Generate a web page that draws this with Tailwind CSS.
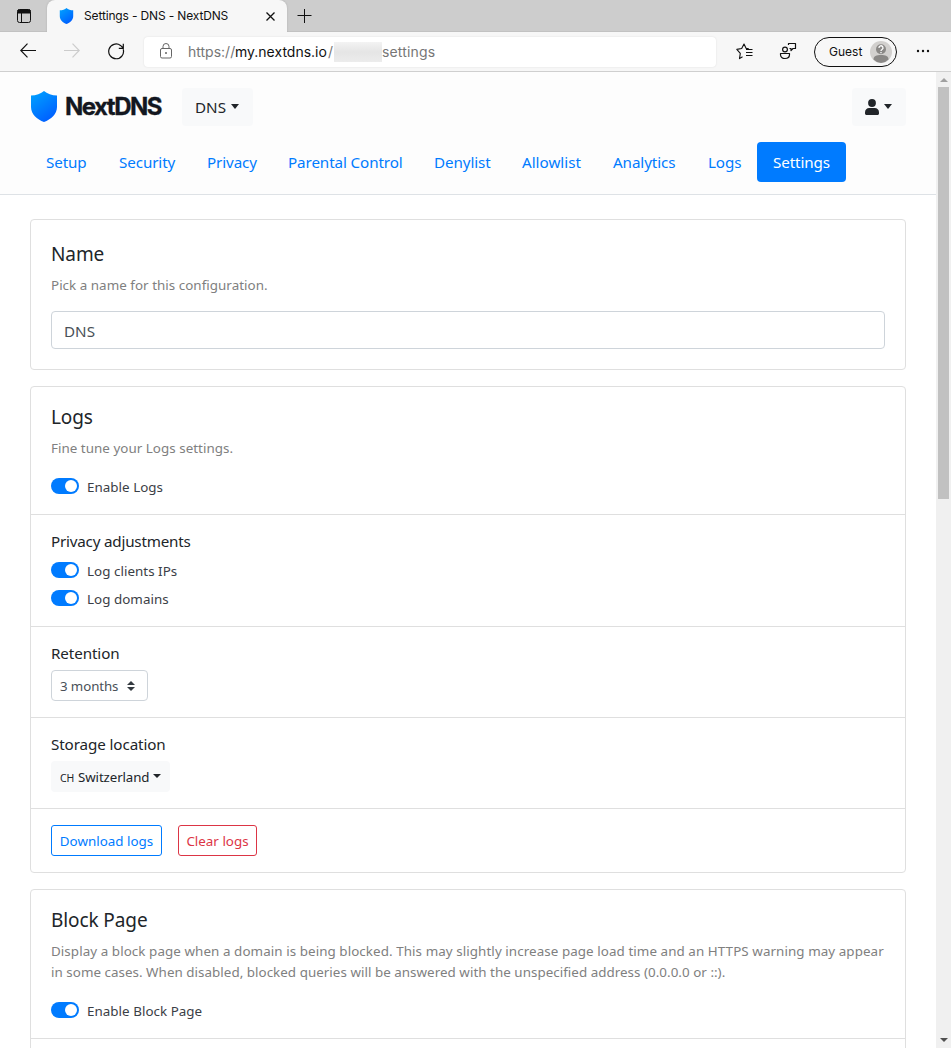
<!DOCTYPE html>
<html lang="en">
<head>
<meta charset="utf-8">
<title>Settings - DNS - NextDNS</title>
<script src="https://cdn.jsdelivr.net/npm/@tailwindcss/browser@4"></script>
</head>
<body class="h-[1048px] w-[951px] overflow-hidden bg-white font-['Noto_Sans','Open_Sans',sans-serif] text-[15.2px] tracking-[-0.1px] text-[#212529]">
<div class="flex h-full flex-col">
  <!-- tab strip -->
  <div class="flex h-8 shrink-0 border-b border-[#c2c2c2] bg-[#cdcdcd] font-[Inter,sans-serif] text-xs tracking-normal text-[#111]">
    <div class="w-[47px] pl-4 pt-2">
      <svg width="16" height="16" viewBox="0 0 16 16" fill="none" stroke="#111"><rect x="1.5" y="1.5" width="13" height="13" rx="2"/><path d="M2 2h12v3H2z" fill="#111"/><path d="M5.5 5v9.500"/></svg>
    </div>
    <div class="flex h-8 w-60 items-center rounded-t-lg bg-[#f7f7f7] pl-3 shadow-[0_0_2px_#aaa]">
      <svg width="15" height="16" viewBox="0 0 26 31"><defs><linearGradient id="shield" x1="0" y1="0" x2="0.6" y2="1"><stop offset="0" stop-color="#00a5ff"/><stop offset="1" stop-color="#0060ff"/></linearGradient></defs><path d="M13 0c3 2.600 8 4.400 13 4.600v11.400c0 7-6 12.500-13 15C6 28.500 0 23 0 16V4.600C5 4.400 10 2.600 13 0z" fill="url(#shield)"/></svg>
      <span class="ml-[10px] w-[150px] whitespace-nowrap tracking-[-0.15px]">Settings - DNS - NextDNS</span>
      <svg class="ml-8" width="9" height="9" viewBox="0 0 9 9" stroke="#111" stroke-width="1.3"><path d="M.5.5l8 8M8.500.5l-8 8"/></svg>
    </div>
    <svg class="ml-[10px] mt-2" width="16" height="16" viewBox="0 0 16 16" stroke="#111"><path d="M7.500 1v14M.5 7.500h14"/></svg>
  </div>
  <!-- toolbar -->
  <div class="flex h-10 shrink-0 items-center border-b border-[#cfcfcf] bg-[#f7f7f7] font-[Inter,sans-serif] tracking-normal text-[#111]">
    <svg class="ml-5 mb-px" width="16" height="16" viewBox="0 0 16 16" fill="none" stroke="#111" stroke-width="1.2"><path d="M16 7.500H.8M7.500.7L.8 7.500l6.700 6.800"/></svg>
    <svg class="ml-7 mb-px" width="16" height="16" viewBox="0 0 16 16" fill="none" stroke="#ccc" stroke-width="1.2"><path d="M0 7.500h15.200M8.500.7L15.200 7.500l-6.700 6.800"/></svg>
    <svg class="ml-7 mb-px" width="17" height="17" viewBox="0 0 17 17" fill="none" stroke="#111" stroke-width="1.2"><path d="M15.200 6.200A7.400 7.400 0 1 1 12.500 2.400L15.200 5M15.300.8v4.500H10.800"/></svg>
    <div class="ml-[19px] flex h-[30px] w-[572px] items-center rounded bg-white shadow-[0_0_2px_#ddd]">
      <svg class="ml-4 mb-px" width="12" height="16" viewBox="0 0 12 16" fill="none" stroke="#666"><rect x=".5" y="5.500" width="11" height="9.500" rx="1.500"/><path d="M3 5.500V3.500a3 3 0 0 1 6 0v2"/><circle cx="6" cy="10" r=".6" fill="#666"/></svg>
      <div class="ml-4 flex items-center whitespace-nowrap text-sm text-[#767676]"><span class="w-[47px]">https://</span><span class="w-[93px] text-[#111]">my.nextdns.io</span><span class="w-[6px]">/</span><span class="h-5 w-12 bg-linear-to-b from-[#f3f3f3] via-[#e5e5e5] to-[#ececec]"></span><span class="tracking-[0.15px]">settings</span></div>
    </div>
    <svg class="ml-5 mb-px" width="17" height="17" viewBox="0 0 17 17" fill="none" stroke="#111" stroke-width="1.1" stroke-linejoin="round"><path d="M6.500 13.800L3.500 15.600 4.300 10.300.8 6.400l4.900-.9L8 1l2.200 4.500h2.500M10 6.500h6.500M10 9.500h6.500M10 12.500h6.500"/></svg>
    <svg class="ml-[26px] mb-px" width="18" height="18" viewBox="0 0 18 18" fill="none" stroke="#111" stroke-width="1.200" stroke-linejoin="round"><circle cx="6" cy="7.500" r="2.400"/><path d="M1.500 11.500h9v1c0 2.500-2 4-4.500 4s-4.500-1.500-4.500-4zM9.500 3V1.500h7v5H14l-2 2V6.500h-1.500"/></svg>
    <div class="ml-[17px] flex h-[30px] w-[83px] items-center rounded-full border border-[#111] pl-[14px] text-xs"><span class="w-[41px]">Guest</span>
      <svg width="22" height="22" viewBox="0 0 22 22"><circle cx="11" cy="11" r="11" fill="#d2d0ce"/><path d="M3.500 18.500c0-3.500 3-4.500 7.500-4.500s7.500 1 7.500 4.500A11 11 0 0 1 11 22a11 11 0 0 1-7.500-3.500z" fill="#8a8886"/><circle cx="11" cy="8.200" r="5" fill="#8a8886"/><path d="M9 7a2 2 0 1 1 3 1.500c-.8.500-1 .8-1 1.500M11 11v1.200" fill="none" stroke="#fff" stroke-width="1.300"/></svg>
    </div>
    <svg class="ml-[19px] mb-px" width="14" height="4" viewBox="0 0 14 4" fill="#111"><circle cx="2" cy="2" r="1.200"/><circle cx="7" cy="2" r="1.200"/><circle cx="12" cy="2" r="1.200"/></svg>
  </div>
  <div class="flex min-h-0 flex-1">
    <main class="w-[936px] overflow-hidden">
      <header class="h-[123px] border-b border-[#dee2e6] bg-[#fdfdfd] px-[30px] pt-4">
        <div class="flex h-[38px] items-center">
          <svg class="mr-2 mb-[2px] ml-px" width="26" height="31" viewBox="0 0 26 31"><path d="M13 0c3 2.600 8 4.400 13 4.600v11.400c0 7-6 12.500-13 15C6 28.500 0 23 0 16V4.600C5 4.400 10 2.600 13 0z" fill="url(#shield)"/></svg>
          <span class="w-[117px] whitespace-nowrap font-[Inter,sans-serif] text-2xl font-bold tracking-[-1.5px] text-[#131720] [-webkit-text-stroke:0.3px_#131720]">NextDNS</span>
          <button class="flex h-[38px] w-[71px] items-center rounded bg-[#f8f9fa] pl-[13px]"><span class="w-9 text-left tracking-normal">DNS</span><span class="mb-px border-x-[4.5px] border-t-[5px] border-x-transparent border-t-[#212529]"></span></button>
          <button class="ml-auto flex h-[38px] w-[54px] items-center rounded bg-[#f8f9fa] pl-[13px]"><svg width="14" height="16" viewBox="0 0 448 512" fill="#212529"><circle cx="224" cy="128" r="125"/><path d="M314 288H134C60 288 0 348 0 422v42c0 26 22 48 48 48h352c26 0 48-22 48-48v-42c0-74-60-134-134-134z"/></svg><span class="mb-px ml-[5px] border-x-[4.5px] border-t-[5px] border-x-transparent border-t-[#212529]"></span></button>
        </div>
        <nav class="mt-4 flex h-10 items-center whitespace-nowrap text-[#007bff]">
          <a class="w-[73px] pl-4">Setup</a><a class="w-[88px] pl-4">Security</a><a class="w-[81px] pl-4">Privacy</a><a class="w-[146px] pl-4">Parental Control</a><a class="w-[88px] pl-4">Denylist</a><a class="w-[91px] pl-4 tracking-normal">Allowlist</a><a class="w-[95px] pl-4">Analytics</a><a class="w-[65px] pl-4">Logs</a><a class="flex h-10 w-[89px] items-center rounded bg-[#007bff] pl-4 text-white">Settings</a>
        </nav>
      </header>
      <div class="flex flex-col gap-4 px-[30px] pt-6">
        <section class="h-[151px] rounded border border-[#dfdfdf] px-5 pt-[19px]">
          <h5 class="h-[30px] text-[19px] leading-[30px]">Name</h5>
          <p class="mt-1.5 h-[21px] text-[13.4px] tracking-[0.03px] leading-[21px] text-[#808080]">Pick a name for this configuration.</p>
          <div class="mt-[15px] flex h-[38px] items-center rounded border border-[#ced4da] px-3 pt-[3px] text-[#495057] tracking-normal">DNS</div>
        </section>
        <section class="h-[487px] rounded border border-[#dfdfdf]">
          <div class="h-[128px] border-b border-[#dfdfdf] px-5 pt-[15px]">
            <h5 class="h-[30px] text-[19px] leading-[30px]">Logs</h5>
            <p class="mt-1.5 h-[21px] text-[13.4px] tracking-[0.03px] leading-[21px] text-[#808080]">Fine tune your Logs settings.</p>
            <label class="mt-[17px] flex h-[21px] items-center gap-2 text-[13.4px] tracking-[0.03px] text-[#3b4046]"><span class="mb-0.5 flex h-4 w-7 items-center justify-end rounded-full bg-[#007bff] pr-0.5"><i class="size-3 rounded-full bg-white"></i></span><span class="pt-0.5">Enable Logs</span></label>
          </div>
          <div class="h-[112px] border-b border-[#dfdfdf] px-5 pt-[14px]">
            <h6 class="h-6 leading-6 tracking-[-0.2px]">Privacy adjustments</h6>
            <label class="mt-[7px] flex h-[21px] items-center gap-2 text-[13.4px] tracking-[0.03px] text-[#3b4046]"><span class="mb-0.5 flex h-4 w-7 items-center justify-end rounded-full bg-[#007bff] pr-0.5"><i class="size-3 rounded-full bg-white"></i></span><span class="pt-0.5">Log clients IPs</span></label>
            <label class="mt-[7px] flex h-[21px] items-center gap-2 text-[13.4px] tracking-[0.03px] text-[#3b4046]"><span class="mb-0.5 flex h-4 w-7 items-center justify-end rounded-full bg-[#007bff] pr-0.5"><i class="size-3 rounded-full bg-white"></i></span><span class="pt-0.5">Log domains</span></label>
          </div>
          <div class="h-[91px] border-b border-[#dfdfdf] px-5 pt-[14px]">
            <h6 class="h-6 leading-6">Retention</h6>
            <div class="mt-[5px] flex h-[31px] w-[97px] items-center rounded border border-[#ced4da] pl-2 text-[13.3px] text-[#495057]"><span class="w-[67px] pt-0.5 whitespace-nowrap">3 months</span><svg width="8" height="10" viewBox="0 0 8 10" fill="#343a40"><path d="M4 0L0 4h8zM4 10L0 6h8z"/></svg></div>
          </div>
          <div class="h-[91px] border-b border-[#dfdfdf] px-5 pt-[14px]">
            <h6 class="h-6 leading-6">Storage location</h6>
            <button class="mt-[5px] flex h-[31px] w-[119px] items-center rounded bg-[#f8f9fa] pl-[9px] text-left text-[13.3px] whitespace-nowrap"><span class="w-[18px] pt-[4px] text-[10.5px]">CH</span><span class="w-[75px] pt-0.5 tracking-[-0.1px]">Switzerland</span><span class="mb-px border-x-4 border-t-4 border-x-transparent border-t-[#212529]"></span></button>
          </div>
          <div class="flex gap-4 px-5 pt-4 text-[13.4px] tracking-normal whitespace-nowrap">
            <button class="h-[31px] w-[111px] rounded-[3px] border border-[#007bff] pt-0.5 text-[#007bff]">Download logs</button>
            <button class="h-[31px] w-[79px] rounded-[3px] border border-[#dc3545] pt-0.5 text-[#dc3545]">Clear logs</button>
          </div>
        </section>
        <section class="h-[200px] shrink-0 rounded border border-[#dfdfdf]">
          <div class="h-[149px] border-b border-[#dfdfdf] px-5 pt-[15px]">
            <h5 class="h-[30px] text-[19px] leading-[30px]">Block Page</h5>
            <p class="mt-1.5 h-[42px] text-[13.4px] leading-[21px] whitespace-nowrap text-[#808080]"><span class="tracking-[0.07px]">Display a block page when a domain is being blocked. This may slightly increase page load time and an HTTPS warning may appear</span><br><span class="tracking-[0.03px]">in some cases. When disabled, blocked queries will be answered with the unspecified address (0.0.0.0 or ::).</span></p>
            <label class="mt-[17px] flex h-[21px] items-center gap-2 text-[13.4px] tracking-[0.03px] text-[#3b4046]"><span class="mb-0.5 flex h-4 w-7 items-center justify-end rounded-full bg-[#007bff] pr-0.5"><i class="size-3 rounded-full bg-white"></i></span><span class="pt-0.5">Enable Block Page</span></label>
          </div>
        </section>
      </div>
    </main>
    <div class="flex w-[15px] flex-col items-center bg-[#f0f0f0] pt-[6px] pb-[6px]">
      <span class="border-x-4 border-b-4 border-x-transparent border-b-[#a0a0a0]"></span>
      <span class="mt-[5px] h-[412px] w-[11px] bg-[#c1c1c1]"></span>
      <span class="mt-auto border-x-4 border-t-4 border-x-transparent border-t-[#505050]"></span>
    </div>
  </div>
</div>
</body>
</html>
